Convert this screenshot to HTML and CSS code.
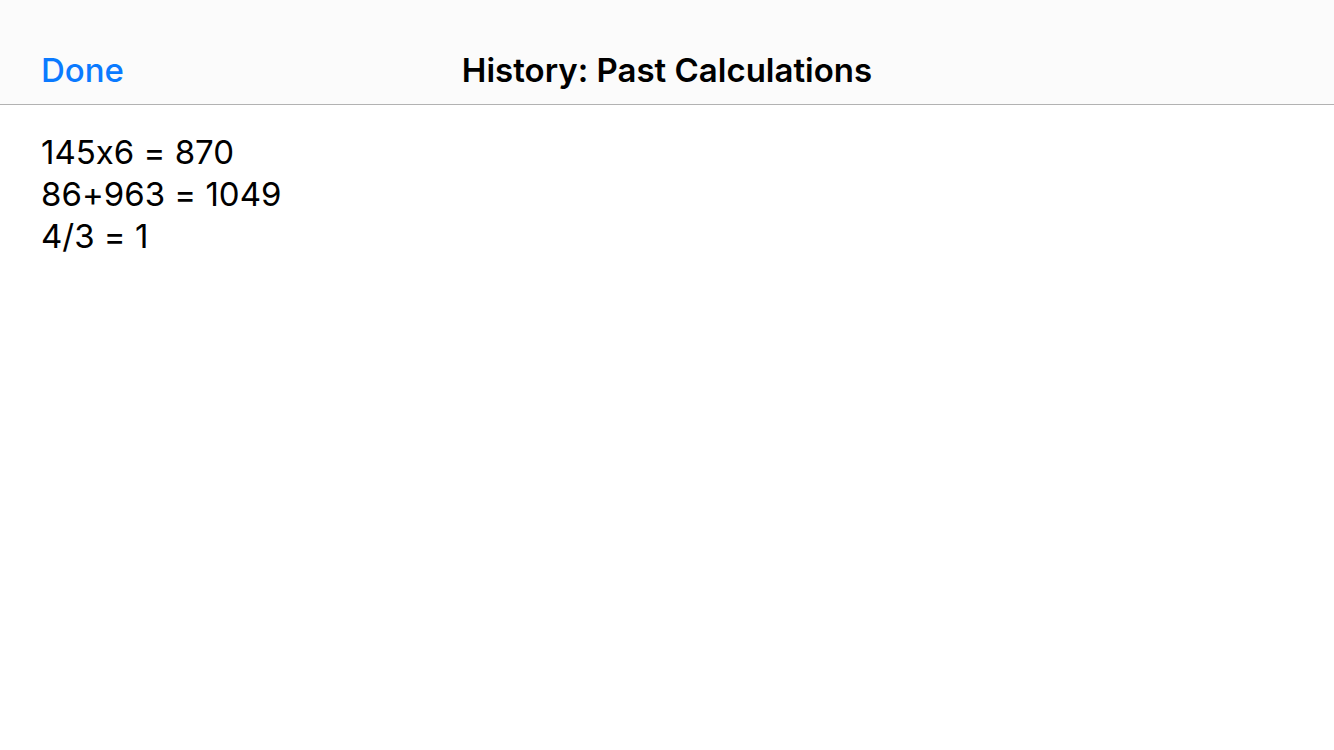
FILE: index.html
```html
<!DOCTYPE html>
<html lang="en">
<head>
<meta charset="utf-8">
<title>History</title>
<link rel="stylesheet" href="styles.css">
</head>
<body>
<header class="navbar">
  <span class="done">Done</span>
  <h1 class="title">History: Past Calculations</h1>
</header>
<main class="history">
  <div class="line">145x6 = 870</div>
  <div class="line">86+963 = 1049</div>
  <div class="line">4/3 = 1</div>
</main>
</body>
</html>
```
FILE: styles.css
```css
html, body {
  margin: 0;
  padding: 0;
  background: #ffffff;
  font-family: "Inter", "Liberation Sans", sans-serif;
  font-feature-settings: "calt" 0;
  color: #000;
}
.navbar {
  height: 105px;
  box-sizing: border-box;
  padding: 36px 41px 0 41px;
  background: #fbfbfb;
  border-bottom: 1px solid #b2b2b2;
  display: grid;
  grid-template-columns: 1fr auto 1fr;
  align-items: center;
}
.done {
  grid-column: 1;
  grid-row: 1;
  color: #0a7aff;
  font-size: 33px;
  font-weight: 550;
  line-height: 60px;
  justify-self: start;
}
.title {
  grid-column: 2;
  grid-row: 1;
  margin: 0;
  font-size: 33px;
  font-weight: 600;
  line-height: 60px;
}
.history {
  padding: 26px 41px;
  font-size: 33px;
  line-height: 42px;
}
```
